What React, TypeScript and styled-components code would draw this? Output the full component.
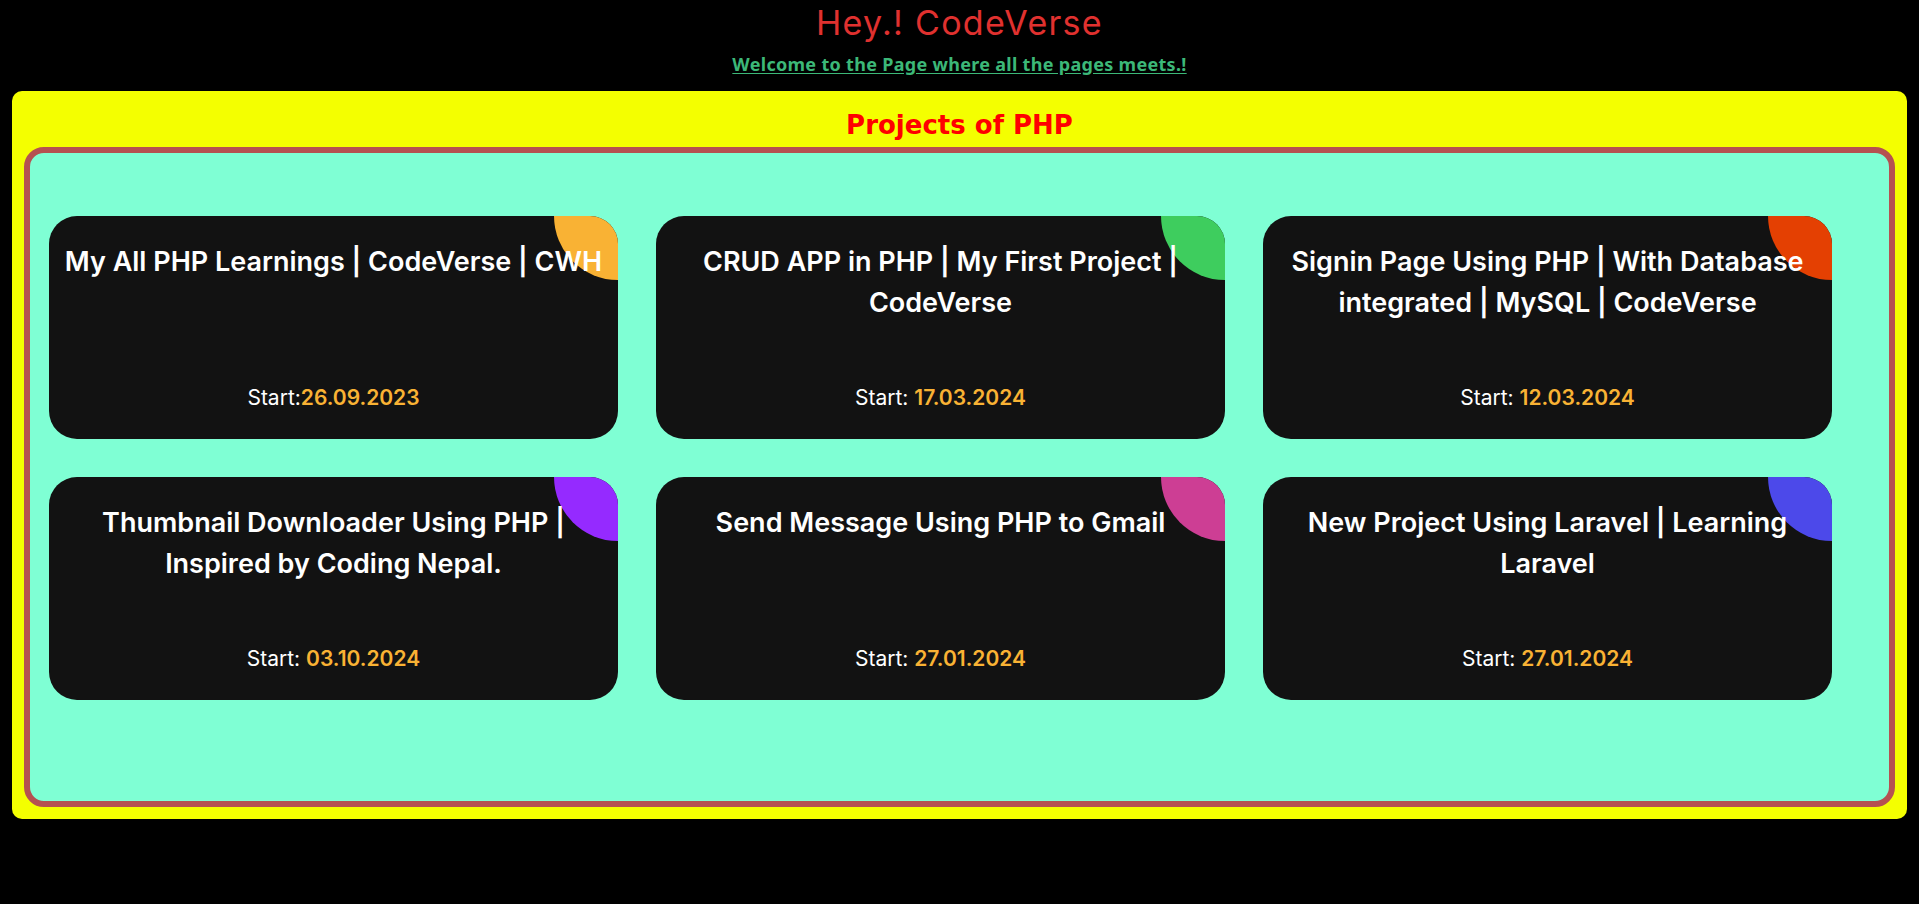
import React from "react";
import styled, { createGlobalStyle } from "styled-components";

const GlobalStyle = createGlobalStyle`
  html, body {
    margin: 0;
    padding: 0;
    background: #000000;
  }
  body {
    font-family: "Inter", "Noto Sans", sans-serif;
  }
  * { box-sizing: border-box; }
`;

const Page = styled.div`
  width: 1919px;
  min-height: 904px;
  background: #000000;
  padding: 0 12px;
`;

const Heading = styled.h1`
  margin: 0;
  text-align: center;
  font-family: "Inter", sans-serif;
  font-weight: 400;
  font-size: 34px;
  letter-spacing: 1.3px;
  line-height: 46px;
  color: #e0312f;
`;

const Welcome = styled.p`
  margin: 8px 0 16px;
  text-align: center;
  line-height: 20px;
`;

const WelcomeLink = styled.a`
  font-family: "Noto Sans", sans-serif;
  font-weight: 700;
  font-size: 18px;
  letter-spacing: 0.3px;
  color: #3cb878;
  text-decoration: underline;
  text-underline-offset: 2px;
`;

const Board = styled.section`
  background: #f4ff00;
  border-radius: 10px;
  padding: 13px 12px 12px;
`;

const BoardTitle = styled.h2`
  margin: 0;
  text-align: center;
  font-family: "DejaVu Sans", sans-serif;
  font-weight: 700;
  font-size: 26px;
  line-height: 43px;
  color: #ff0000;
`;

const Panel = styled.div`
  height: 660px;
  background: #7fffd4;
  border: 6px solid #b55151;
  border-radius: 20px;
  padding: 63px 0 0 19px;
  display: flex;
  flex-wrap: wrap;
  align-content: flex-start;
  gap: 38px;
`;

const Card = styled.article`
  position: relative;
  overflow: hidden;
  width: 569px;
  height: 223px;
  background: #121212;
  border-radius: 28px;
  padding: 25px 8px 28px;
  display: flex;
  flex-direction: column;
  justify-content: space-between;
  align-items: center;
  text-align: center;
`;

const Blob = styled.span<{ $color: string }>`
  position: absolute;
  top: -64px;
  right: -64px;
  width: 128px;
  height: 128px;
  border-radius: 50%;
  background: ${(p) => p.$color};
`;

const CardTitle = styled.h3`
  position: relative;
  margin: 0;
  font-family: "Inter", sans-serif;
  font-weight: 600;
  font-size: 27px;
  line-height: 41px;
  color: #ffffff;
`;

const Start = styled.p`
  position: relative;
  margin: 0;
  font-family: "Inter", sans-serif;
  font-weight: 400;
  font-size: 21px;
  line-height: 26px;
  color: #ffffff;
`;

const DateText = styled.span`
  font-weight: 600;
  color: #f9b234;
`;

type Project = { title: string; label: string; date: string; color: string };

const projects: Project[] = [
  { title: "My All PHP Learnings | CodeVerse | CWH", label: "Start:", date: "26.09.2023", color: "#f9b234" },
  { title: "CRUD APP in PHP | My First Project | CodeVerse", label: "Start: ", date: "17.03.2024", color: "#3ecd5e" },
  { title: "Signin Page Using PHP | With Database integrated | MySQL | CodeVerse", label: "Start: ", date: "12.03.2024", color: "#e44002" },
  { title: "Thumbnail Downloader Using PHP | Inspired by Coding Nepal.", label: "Start: ", date: "03.10.2024", color: "#952aff" },
  { title: "Send Message Using PHP to Gmail", label: "Start: ", date: "27.01.2024", color: "#cd3e94" },
  { title: "New Project Using Laravel | Learning Laravel", label: "Start: ", date: "27.01.2024", color: "#4c49ea" },
];

export default function App() {
  return (
    <>
      <GlobalStyle />
      <Page>
        <Heading>Hey.! CodeVerse</Heading>
        <Welcome>
          <WelcomeLink href="#">Welcome to the Page where all the pages meets.!</WelcomeLink>
        </Welcome>
        <Board>
          <BoardTitle>Projects of PHP</BoardTitle>
          <Panel>
            {projects.map((p) => (
              <Card key={p.title}>
                <Blob $color={p.color} />
                <CardTitle>{p.title}</CardTitle>
                <Start>
                  {p.label}
                  <DateText>{p.date}</DateText>
                </Start>
              </Card>
            ))}
          </Panel>
        </Board>
      </Page>
    </>
  );
}
